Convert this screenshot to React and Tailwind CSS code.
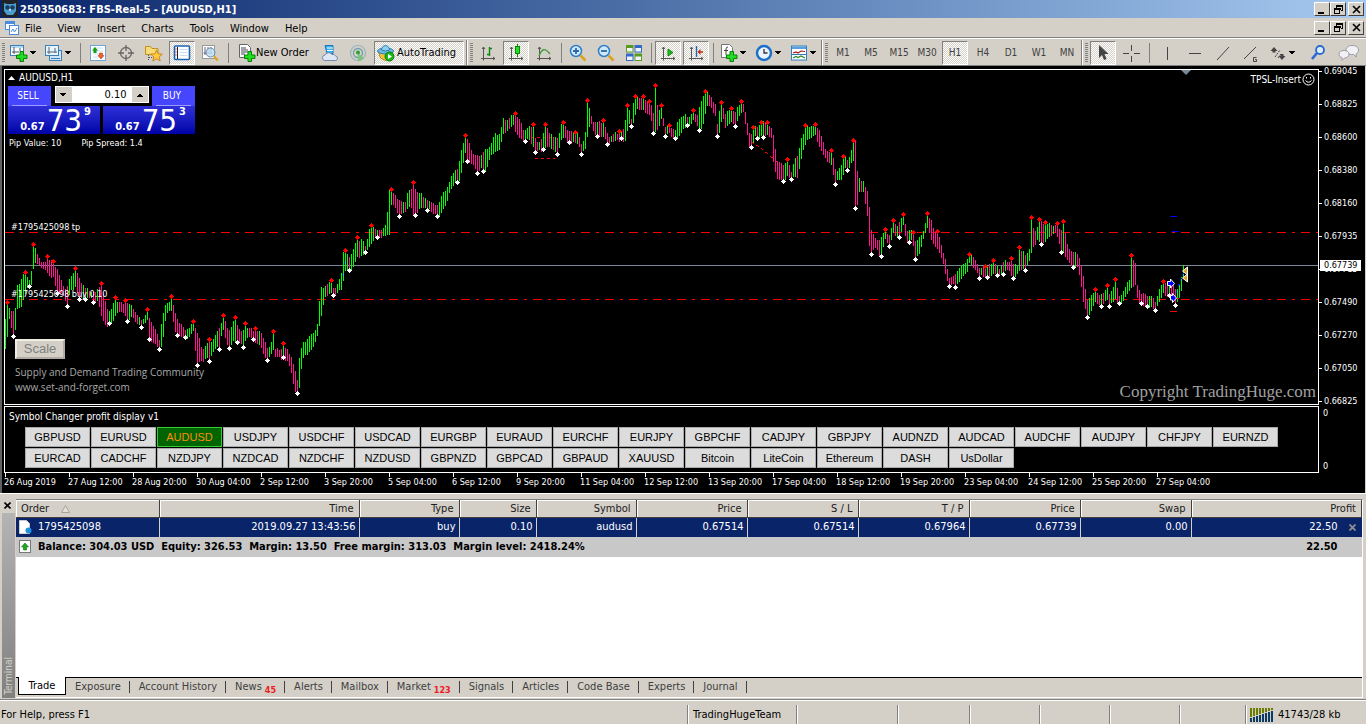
import { useState } from "react";

const MENU = ["File", "View", "Insert", "Charts", "Tools", "Window", "Help"];
const FRAMES = ["M1", "M5", "M15", "M30", "H1", "H4", "D1", "W1", "MN"];
const PRICES = [
  "0.69045", "0.68825", "0.68600", "0.68380", "0.68160", "0.67935",
  "0.67715", "0.67490", "0.67270", "0.67050", "0.66825",
];
const DATES = [
  "26 Aug 2019", "27 Aug 12:00", "28 Aug 20:00", "30 Aug 04:00", "2 Sep 12:00",
  "3 Sep 20:00", "5 Sep 04:00", "6 Sep 12:00", "9 Sep 20:00", "11 Sep 04:00",
  "12 Sep 12:00", "13 Sep 20:00", "17 Sep 04:00", "18 Sep 12:00", "19 Sep 20:00",
  "23 Sep 04:00", "24 Sep 12:00", "25 Sep 20:00", "27 Sep 04:00",
];
const SYMBOLS = [
  ["GBPUSD", "EURUSD", "AUDUSD", "USDJPY", "USDCHF", "USDCAD", "EURGBP", "EURAUD", "EURCHF", "EURJPY",
    "GBPCHF", "CADJPY", "GBPJPY", "AUDNZD", "AUDCAD", "AUDCHF", "AUDJPY", "CHFJPY", "EURNZD"],
  ["EURCAD", "CADCHF", "NZDJPY", "NZDCAD", "NZDCHF", "NZDUSD", "GBPNZD", "GBPCAD", "GBPAUD", "XAUUSD",
    "Bitcoin", "LiteCoin", "Ethereum", "DASH", "UsDollar"],
];
const COLUMNS = [
  ["Order", "1795425098"],
  ["Time", "2019.09.27 13:43:56"],
  ["Type", "buy"],
  ["Size", "0.10"],
  ["Symbol", "audusd"],
  ["Price", "0.67514"],
  ["S / L", "0.67514"],
  ["T / P", "0.67964"],
  ["Price", "0.67739"],
  ["Swap", "0.00"],
  ["Profit", "22.50"],
];
const TABS = [
  ["Exposure"], ["Account History"], ["News", "45"], ["Alerts"], ["Mailbox"], ["Market", "123"],
  ["Signals"], ["Articles"], ["Code Base"], ["Experts"], ["Journal"],
];

// x, top and bottom of the bar range
const RANGE = [
  5,320,347, 7,303,336, 9,310,318, 12,312,332, 15,309,330, 17,287,309, 20,282,307, 22,276,300, 25,274,291, 27,279,286,
  30,281,285, 32,262,280, 33,247,268, 35,250,262, 38,256,264, 42,265,269, 47,260,270, 50,262,275, 53,263,275, 57,270,292,
  62,285,292, 66,290,304, 70,278,292, 75,270,284, 79,280,296, 85,289,297, 90,292,297, 95,294,303, 98,287,300, 101,287,313,
  106,307,325, 110,313,325, 113,305,320, 116,302,313, 121,304,312, 125,303,313, 128,305,318, 132,307,314, 136,315,322,
  140,320,325, 144,318,324, 147,313,320, 150,320,338, 155,331,341, 159,340,348, 162,317,344, 166,304,312, 171,300,311,
  175,313,332, 179,324,332, 184,330,337, 188,330,337, 193,323,330, 196,330,362, 198,337,363, 202,350,360, 206,346,354,
  209,343,358, 213,340,350, 218,331,345, 223,318,330, 227,328,345, 230,331,347, 232,325,337, 235,320,340, 239,330,340,
  242,333,345, 246,327,338, 250,330,337, 255,331,340, 260,333,343, 264,340,355, 268,352,358, 273,335,350, 275,350,357,
  280,350,357, 283,348,356, 288,352,360, 292,360,375, 294,369,390, 297,380,392, 299,358,388, 302,345,360, 308,338,350,
  313,335,345, 317,325,334, 320,290,320, 324,287,298, 331,283,293, 334,290,295, 338,285,288, 341,273,288, 342,253,283,
  345,252,270, 348,258,268, 352,252,270, 357,241,257, 362,240,252, 365,248,251, 369,230,245, 371,228,243, 375,229,237,
  381,232,238, 386,223,232, 389,192,232, 391,192,203, 394,194,203, 398,202,215, 401,201,213, 405,203,212, 408,191,208,
  411,189,205, 413,184,213, 416,195,213, 420,192,205, 424,200,207, 428,200,208, 433,205,214, 438,205,214, 442,195,208,
  446,190,203, 449,183,192, 454,170,183, 458,170,182, 460,155,180, 462,145,165, 465,138,150, 468,142,160, 473,155,163,
  477,157,172, 482,154,167, 486,150,172, 490,146,152, 495,135,150, 500,135,147, 502,120,134, 508,120,130, 513,115,125,
  515,114,129, 519,121,135, 524,132,140, 528,128,137, 533,126,147, 536,145,152, 542,138,148, 545,127,145, 549,133,145,
  554,139,150, 558,137,152, 561,125,140, 564,124,137, 568,132,141, 574,134,140, 578,134,142, 581,146,153, 584,138,149,
  586,126,148, 587,103,137, 590,113,122, 593,122,128, 597,124,135, 603,122,135, 608,138,143, 613,135,142, 619,133,139,
  624,131,139, 626,113,138, 628,107,120, 631,120,125, 634,97,120, 636,96,108, 640,100,110, 645,100,110, 650,104,113,
  653,113,131, 655,87,130, 658,115,128, 661,107,118, 665,128,134, 669,126,133, 675,132,137, 678,120,135, 684,116,127,
  690,117,126, 693,112,120, 697,115,123, 700,105,128, 704,96,120, 706,91,103, 710,98,105, 715,104,116, 717,125,134,
  720,107,132, 722,104,112, 725,115,125, 731,110,120, 735,113,124, 740,103,113, 743,105,112, 746,118,130, 749,133,144,
  751,135,145, 755,128,134, 758,127,137, 762,123,134, 767,123,135, 771,130,138, 773,135,162, 777,162,176, 780,165,177,
  784,165,180, 787,161,175, 791,172,178, 794,160,177, 798,157,178, 800,139,160, 803,135,147, 806,127,139, 811,127,136,
  815,126,134, 819,130,147, 824,148,157, 829,153,160, 831,152,162, 833,160,173, 836,173,178, 841,167,179, 845,156,168,
  848,163,170, 853,142,158, 855,142,205, 857,173,202, 859,180,190, 863,182,190, 867,193,215, 869,207,245, 871,230,252,
  875,240,248, 880,240,254, 885,232,237, 889,236,245, 893,222,232, 897,226,237, 900,222,235, 903,215,225, 907,232,240,
  912,232,238, 915,242,257, 919,239,253, 924,229,236, 927,215,228, 931,220,237, 934,233,243, 938,233,248, 942,250,258,
  946,265,278, 949,278,285, 953,278,284, 958,269,280, 962,268,275, 967,260,270, 969,255,262, 974,258,268, 979,270,277,
  984,266,273, 988,267,277, 993,262,272, 998,270,275, 1004,262,272, 1009,262,268, 1013,266,278, 1018,266,270,
  1019,250,269, 1025,255,268, 1029,250,261, 1031,219,253, 1034,232,244, 1038,226,235, 1040,222,243, 1045,225,240,
  1050,225,235, 1056,226,233, 1060,230,247, 1062,230,252, 1063,223,250, 1067,246,258, 1072,253,265, 1077,254,266,
  1080,260,280, 1083,278,302, 1087,300,316, 1091,297,308, 1095,292,300, 1100,297,305, 1107,287,300, 1109,296,306,
  1115,282,296, 1119,298,303, 1124,290,298, 1130,278,288, 1131,257,288, 1135,265,285, 1137,285,298, 1141,295,302,
  1146,296,305, 1151,297,306, 1155,302,310, 1159,290,302, 1163,283,293, 1168,283,294, 1172,283,295, 1175,290,304,
  1178,290,300, 1181,277,290, 1183,265,278,
];

// fractal points, x and y
const HIGHS = [
  7,302, 25,272, 33,244, 47,256, 53,261, 75,268, 101,283, 115,297, 125,300, 147,309, 171,296, 193,321, 209,339, 223,315,
  235,317, 245,323, 255,328, 273,331, 283,343, 331,280, 345,250, 357,237, 371,225, 391,189, 413,182, 465,135, 515,113,
  533,124, 545,124, 563,122, 575,132, 587,100, 603,120, 619,131, 627,105, 635,96, 643,96, 649,101, 655,85, 661,105,
  669,125, 693,110, 705,91, 721,102, 731,108, 741,101, 753,127, 761,122, 767,122, 787,159, 805,125, 815,124, 831,150,
  843,156, 853,140, 885,229, 893,220, 903,214, 913,232, 927,213, 937,231, 969,254, 985,266, 993,260, 1011,258, 1019,247,
  1031,217, 1039,219, 1045,222, 1057,223, 1063,221, 1095,289, 1107,285, 1115,279, 1131,255, 1163,281,
];
const LOWS = [
  13,336, 29,286, 57,293, 67,306, 79,299, 85,299, 93,302, 109,323, 127,321, 141,327, 149,339, 159,349, 177,335, 185,337,
  197,365, 209,361, 219,349, 229,348, 237,342, 243,347, 253,339, 267,360, 283,357, 297,393, 333,295, 349,270, 365,252,
  377,237, 399,216, 415,215, 427,210, 437,216, 457,182, 467,161, 477,173, 483,171, 525,141, 535,152, 543,149, 557,154,
  569,142, 581,154, 597,136, 607,144, 621,138, 631,126, 653,133, 665,136, 675,138, 687,125, 699,130, 717,136, 735,126,
  751,147, 757,138, 763,137, 783,181, 791,179, 835,184, 847,170, 855,208, 871,254, 881,256, 889,246, 899,237, 909,242,
  915,259, 949,286, 955,287, 979,278, 987,277, 997,275, 1003,274, 1013,278, 1025,270, 1041,244, 1061,252, 1073,267,
  1087,317, 1101,306, 1109,306, 1119,303, 1141,303, 1147,306, 1155,310, 1169,295, 1175,305,
];

function pairs(list) {
  const out = [];
  for (let i = 0; i < list.length; i += 2) out.push([list[i], list[i + 1]]);
  return out;
}

function buildBars() {
  const highs = new Map(pairs(HIGHS));
  const lows = new Map(pairs(LOWS));
  const bars = [];
  let k = 0;
  let last = 340;
  for (let x = 5; x <= 1183; x += 2) {
    while (k + 3 < RANGE.length - 3 && RANGE[k + 3] <= x) k += 3;
    const t = Math.min(1, (x - RANGE[k]) / (RANGE[k + 3] - RANGE[k]));
    const n = (x * 7919) % 13;
    let top = Math.round(RANGE[k + 1] + (RANGE[k + 4] - RANGE[k + 1]) * t) - (n % 3);
    let bottom = Math.round(RANGE[k + 2] + (RANGE[k + 5] - RANGE[k + 2]) * t) + (n % 4);
    if (highs.has(x)) top = highs.get(x) + 1;
    if (lows.has(x)) bottom = lows.get(x);
    const mid = (top + bottom) / 2;
    bars.push({ x, top, h: Math.max(3, bottom - top), up: mid + (n % 5) - 2 < last });
    last = mid;
  }
  return bars;
}

const BARS = buildBars();

/* ---------- toolbar parts ---------- */

function Caret() {
  return (
    <svg width="7" height="4" viewBox="0 0 7 4" shapeRendering="crispEdges">
      <path d="M0 0h6L3 4z" fill="#000" />
    </svg>
  );
}

function Tool({ label, pressed, drop, children }) {
  if (drop) {
    return (
      <button aria-label={label} className="flex h-6 w-[35px] items-center gap-px pl-[3px]">
        <span className="flex w-5 justify-center">{children}</span>
        <Caret />
      </button>
    );
  }
  return (
    <span className="flex h-6 w-7 justify-center">
      <button
        aria-label={label}
        className={
          pressed
            ? "flex w-[26px] items-center justify-center border border-t-[#808080] border-l-[#808080] border-r-white border-b-white bg-[repeating-conic-gradient(#ffffff_0_25%,#d4d0c8_0_50%)] bg-[length:2px_2px]"
            : "flex w-[26px] items-center justify-center"
        }
      >
        {children}
      </button>
    </span>
  );
}

function Sep({ narrow }) {
  return (
    <span className={narrow ? "flex h-6 w-[6px] justify-center" : "flex h-6 w-2 justify-center"}>
      <span className="h-5 w-px self-center bg-[#808080]" />
    </span>
  );
}

function Grip({ edge }) {
  return (
    <span className="flex h-[26px] w-2 items-center gap-[2px]">
      {edge && <span className="h-[26px] w-[2px] border-r border-white bg-[#808080]" />}
      <span className="h-5 w-[3px] bg-[repeating-linear-gradient(#808080_0_1px,#d4d0c8_1px_2px)]" />
    </span>
  );
}

function Icon({ children, size = 18 }) {
  return <svg width={size} height={size} viewBox="0 0 18 18" fill="none">{children}</svg>;
}

const Plus = ({ x = 6, y = 7 }) => (
  <path transform={`translate(${x} ${y})`} d="M4 .5h3.500v3.500h3.500v3.500h-3.500v3h-3.500v-3h-3.500v-3.500h3.500z" fill="#22dd22" stroke="#058205" />
);

function NewChart() {
  return (
    <Icon>
      <rect x="0.500" y="1.500" width="13" height="10" fill="#fff" stroke="#3a7fb8" />
      <path d="M1 2h12v2h-12z" fill="#b8dcf4" />
      <path d="M4 3v7M2 8h7M10 4v3" stroke="#456" />
      <Plus />
    </Icon>
  );
}
function Profiles() {
  return (
    <Icon>
      <rect x="4.500" y="6.500" width="12" height="10" fill="#cfe6f8" stroke="#3a7fb8" />
      <rect x="0.500" y="1.500" width="13" height="10" fill="#e8f4fd" stroke="#3a7fb8" />
      <path d="M4 3v7M2 8h10M10 4v5" stroke="#567" />
      <path d="M6 14.500h9" stroke="#3a7fb8" />
    </Icon>
  );
}
function MarketWatch() {
  return (
    <Icon>
      <rect x="1.500" y="1.500" width="15" height="15" fill="#fff" stroke="#6aa7d6" />
      <path d="M4 4h10M4 7h10M4 10h10M4 13h10" stroke="#c8dff0" />
      <path d="M6 3l3 3.500H7.500V9h-3V6.500H3z" fill="#18a018" />
      <path d="M12 15l3-3.500h-1.500V9h-3v2.500H9z" fill="#f06030" stroke="#b03010" strokeWidth=".5" />
    </Icon>
  );
}
function Target() {
  return (
    <Icon>
      <circle cx="9" cy="9" r="5.500" stroke="#666" strokeWidth="1.300" />
      <path d="M9 1v6M9 11v6M1 9h6M11 9h6" stroke="#666" strokeWidth="1.300" />
    </Icon>
  );
}
function Favorites() {
  return (
    <Icon>
      <path d="M.5 2.500h5l1.500 2h6v6H.5z" fill="#f8dc78" stroke="#c09020" />
      <path d="M3.500 11v6M4 13.500h5" stroke="#555" strokeDasharray="1 1" />
      <path d="M11.500 6l1.700 3.800 4.100.4-3.100 2.700 1 4.100-3.700-2.200L7.800 17l1-4.100L5.700 10.200l4.100-.4z" fill="#ffc840" stroke="#c07810" strokeWidth=".8" />
    </Icon>
  );
}
function Navigator() {
  return (
    <Icon>
      <rect x="1.500" y="2" width="15" height="13.500" rx="1" fill="#fff" stroke="#1c64b4" strokeWidth="1.600" />
      <path d="M4.500 3v12" stroke="#222" />
      <path d="M2.500 5h1M2.500 8h1M2.500 11h1" stroke="#d00" />
      <path d="M6.500 5.500h8M6.500 8.500h8M6.500 11.500h8" stroke="#c9def2" />
    </Icon>
  );
}
function Tester() {
  return (
    <Icon>
      <rect x="1.500" y="1.500" width="12" height="13" fill="#fff" stroke="#999" />
      <path d="M4 3v8M2.500 9h9M7 3v4M10 3v5" stroke="#668" />
      <circle cx="9.500" cy="8.500" r="4.500" fill="#b9dcf2" fillOpacity=".8" stroke="#6d8ba5" />
      <path d="M12.800 12.200l4 4.300" stroke="#d8a420" strokeWidth="2.400" />
    </Icon>
  );
}
function NewOrderIcon() {
  return (
    <Icon>
      <path d="M1.500.5h8l3 3v10h-11z" fill="#fff" stroke="#666" />
      <path d="M3 4h5M3 6h7M3 8h7M3 10h4" stroke="#445" />
      <Plus x={6} y={7} />
    </Icon>
  );
}
function Cloud() {
  return (
    <Icon>
      <path d="M4 1.500h8v8H6z" fill="#38b0f0" stroke="#1878c0" />
      <path d="M6 4h6M6 6.500h6" stroke="#fff" />
      <path d="M3.500 16.500a2.800 2.800 0 0 1 .5-5.500 4 4 0 0 1 7-.5 2.800 2.800 0 0 1 3.500 1.500 2.300 2.300 0 0 1 .3 4.500z" fill="#dfe7f4" stroke="#7488b0" />
    </Icon>
  );
}
function Signals() {
  return (
    <Icon>
      <circle cx="9" cy="9" r="7.500" stroke="#9ab4bd" strokeWidth="1.200" />
      <circle cx="9" cy="9" r="4.500" stroke="#6e9fae" strokeWidth="1.300" />
      <path d="M9 9v8.500a8 8 0 0 0 6-3.500z" fill="#7cc47c" />
      <circle cx="9" cy="8.500" r="2" fill="#30a030" />
    </Icon>
  );
}
function AutoIcon() {
  return (
    <Icon>
      <path d="M1.500 8l2 6 5 2.500 5-1 2-7z" fill="#f2c63c" stroke="#b8860b" />
      <ellipse cx="8.500" cy="7" rx="8" ry="3" fill="#6cb8e0" stroke="#2f7fae" />
      <path d="M4.500 6a4 4.500 0 0 1 8 0q-4 2-8 0z" fill="#8fd0f0" stroke="#2f7fae" />
      <circle cx="12.500" cy="12.500" r="4.500" fill="#18b818" stroke="#0a7a0a" />
      <path d="M11 10l4 2.500-4 2.500z" fill="#fff" />
    </Icon>
  );
}
const Axes = () => <path d="M4.500 3v13.500M2 14.500h14M3 5l1.500-2L6 5M14 13l2 1.500-2 1.500" stroke="#555" />;

function BarsIcon() {
  return <Icon><Axes /><path d="M10.500 3v9M8 10.500h2M11 4.500h2" stroke="#0a8a0a" strokeWidth="1.400" /></Icon>;
}
function CandleIcon() {
  return <Icon><Axes /><path d="M10.500 0v13" stroke="#0a8a0a" /><rect x="8.500" y="2.500" width="4" height="7" fill="#22dd22" stroke="#0a8a0a" /></Icon>;
}
function LineIcon() {
  return <Icon><Axes /><path d="M4 12C7 4 10 4 15 10" stroke="#3a9a3a" strokeWidth="1.300" /></Icon>;
}
function Zoom({ plus }) {
  return (
    <Icon>
      <circle cx="7" cy="7" r="5.500" fill="#cfe9fb" stroke="#2f7fc8" strokeWidth="1.500" />
      <path d={plus ? "M4 7h6M7 4v6" : "M4 7h6"} stroke="#2a6aa8" strokeWidth="1.800" />
      <path d="M11.500 11.500l5 5" stroke="#d8a420" strokeWidth="2.600" />
    </Icon>
  );
}
function Tile() {
  return (
    <Icon>
      <path d="M1 1h7.500v7.500H1z" fill="#5a9a20" /><path d="M9.500 1H17v7.500H9.500z" fill="#3468c8" />
      <path d="M1 9.500h7.500V17H1z" fill="#3468c8" /><path d="M9.500 9.500H17V17H9.500z" fill="#5a9a20" />
      <path d="M2 4h5.500v3.500H2zM10.500 4H16v3.500h-5.500zM2 12.500h5.500V16H2zM10.500 12.500H16V16h-5.500z" fill="#eef4fa" />
    </Icon>
  );
}
function AutoScroll() {
  return <Icon><Axes /><path d="M9 5l5 3.500L9 12z" fill="#22b822" stroke="#0a8a0a" /></Icon>;
}
function Shift() {
  return <Icon><Axes /><path d="M9.500 2v11" stroke="#1c64b4" strokeWidth="1.400" /><path d="M16 8h-4" stroke="#c03010" strokeWidth="1.500" /><path d="M10.500 8l3-3v6z" fill="#c03010" /></Icon>;
}
function Indicators() {
  return (
    <Icon>
      <path d="M1.500.5h8l3 3v10h-11z" fill="#fff" stroke="#777" />
      <path d="M6 11V5q0-2 2-2M4 6.500h4" stroke="#444" />
      <Plus />
    </Icon>
  );
}
function ClockIcon() {
  return (
    <Icon>
      <circle cx="9" cy="9" r="7" fill="#eaf4fd" stroke="#1c70cc" strokeWidth="2.500" />
      <path d="M9 5v4h3.500" stroke="#333" strokeWidth="1.300" />
    </Icon>
  );
}
function Template() {
  return (
    <Icon>
      <rect x="1.500" y="2" width="15" height="14" fill="#fff" stroke="#2f7fc0" />
      <path d="M2 2.500h14v2.500H2z" fill="#5aa0dc" />
      <path d="M3 9l3-1 2 1 3-2 4 .5" stroke="#a02010" strokeWidth="1.200" />
      <path d="M2 10.500h14" stroke="#2f7fc0" />
      <path d="M3 14l3-1.500 2 1 3-1.500 4 2" stroke="#208a20" strokeWidth="1.200" />
    </Icon>
  );
}
function WinGlyph({ kind }) {
  return (
    <svg width="9" height="9" viewBox="0 0 9 9" fill="none" stroke="#000" shapeRendering="crispEdges">
      {kind === "Minimize" && <path d="M0 8h6" strokeWidth="2" />}
      {kind === "Restore" && (
        <>
          <path d="M2 1h7M0 4h7" strokeWidth="2" />
          <path d="M2.500 2v1M8.500 2v4M7 5.500h2M.5 4v5M0 8.500h6M5.500 4v5" />
        </>
      )}
      {kind === "Close" && <path d="M1 1l7 7M8 1L1 8" strokeWidth="1.600" shapeRendering="auto" />}
    </svg>
  );
}
function WinButtons({ target }) {
  return (
    <div className="flex pr-[2px]">
      {["Minimize", "Restore", "Close"].map((k) => (
        <button
          key={k}
          aria-label={`${k} ${target}`}
          className={
            "flex h-[14px] w-4 items-center justify-center border border-t-white border-l-white border-r-[#404040] border-b-[#404040] bg-[#d4d0c8]" +
            (k === "Close" ? " ml-[2px]" : "")
          }
        >
          <WinGlyph kind={k} />
        </button>
      ))}
    </div>
  );
}

function Toolbar() {
  const [frame, setFrame] = useState("H1");
  return (
    <div className="flex h-7 items-center overflow-hidden border-t border-white border-b border-b-[#808080] bg-[#d4d0c8] pt-[2px]">
      <span className="flex w-[6px] pl-[2px]"><Grip /></span>
      <Tool label="New chart" drop><NewChart /></Tool>
      <Tool label="Profiles" drop><Profiles /></Tool>
      <Sep />
      <Tool label="Market Watch"><MarketWatch /></Tool>
      <Tool label="Data Window"><Target /></Tool>
      <Tool label="Navigator"><Favorites /></Tool>
      <Tool label="Terminal" pressed><Navigator /></Tool>
      <Tool label="Strategy Tester"><Tester /></Tool>
      <Sep />
      <button className="flex h-6 w-[84px] items-center pl-[6px] text-black"><NewOrderIcon /><span className="whitespace-nowrap">New Order</span></button>
      <Tool label="MQL5 Cloud"><Cloud /></Tool>
      <Tool label="Signals"><Signals /></Tool>
      <button className="mx-[2px] flex h-6 w-[90px] items-center gap-[2px] border border-t-[#808080] border-l-[#808080] border-r-white border-b-white bg-[repeating-conic-gradient(#ffffff_0_25%,#d4d0c8_0_50%)] bg-[length:2px_2px] pl-[2px] text-black">
        <AutoIcon />
        <span>AutoTrading</span>
      </button>
      <Grip edge />
      <Tool label="Bar Chart"><BarsIcon /></Tool>
      <Tool label="Candlesticks" pressed><CandleIcon /></Tool>
      <Tool label="Line Chart"><LineIcon /></Tool>
      <Sep narrow />
      <Tool label="Zoom In"><Zoom plus /></Tool>
      <Tool label="Zoom Out"><Zoom /></Tool>
      <Tool label="Tile Windows"><Tile /></Tool>
      <Sep narrow />
      <Tool label="Auto Scroll" pressed><AutoScroll /></Tool>
      <Tool label="Chart Shift" pressed><Shift /></Tool>
      <Sep narrow />
      <Tool label="Indicators" drop><Indicators /></Tool>
      <Tool label="Periods" drop><ClockIcon /></Tool>
      <Tool label="Templates" drop><Template /></Tool>
      <Grip edge />
      {FRAMES.map((f) => (
        <span key={f} className="flex h-6 w-7 justify-center">
          <button
            onClick={() => setFrame(f)}
            className={
              f === frame
                ? "w-[26px] border border-t-[#808080] border-l-[#808080] border-r-white border-b-white bg-[repeating-conic-gradient(#ffffff_0_25%,#d4d0c8_0_50%)] bg-[length:2px_2px] text-[10px] text-[#404040]"
                : "w-[26px] text-[10px] text-[#404040]"
            }
          >
            {f}
          </button>
        </span>
      ))}
      <Grip edge />
      <Tool label="Cursor" pressed>
        <Icon><path d="M5 1v13l3-3 2 5 2.500-1-2-5h4z" fill="#444" /></Icon>
      </Tool>
      <Tool label="Crosshair">
        <Icon><path d="M9.500 1v6M9.500 12v6M1 9.500h6M12 9.500h6" stroke="#444" /></Icon>
      </Tool>
      <Sep />
      <Tool label="Vertical line"><Icon><path d="M9.500 3v13" stroke="#444" /></Icon></Tool>
      <Tool label="Horizontal line"><Icon><path d="M3 9.500h12" stroke="#444" /></Icon></Tool>
      <Tool label="Trendline"><Icon><path d="M3 16L15 3" stroke="#444" /></Icon></Tool>
      <Tool label="Channel">
        <Icon><path d="M2 15L14 3M14.500 13.500h-3v4h3v-2h-1.500" stroke="#444" /></Icon>
      </Tool>
      <Tool label="Arrows" drop>
        <Icon>
          <path d="M5 3l3.500 4H6.500v1.500h-3V7H1.500zM13 16l-3.500-4h2v-2h3v2h2z" fill="#444" />
          <path d="M6 13l5-7M9 14l3-4" stroke="#444" strokeDasharray="2 1" />
        </Icon>
      </Tool>
      <span className="ml-auto flex gap-[3px] pr-[3px]">
        <Tool label="Search">
          <Icon>
            <circle cx="11" cy="6" r="4" fill="#dcecfa" stroke="#2868d0" strokeWidth="1.800" />
            <path d="M8 9l-5 6" stroke="#2868d0" strokeWidth="2.600" />
          </Icon>
        </Tool>
        <Tool label="Chat">
          <svg width="22" height="18" viewBox="0 0 22 18" fill="#f2f2f6" stroke="#9a9aa6">
            <path d="M14 1.500c4 0 6.500 2 6.500 4.500 0 2-1 3.200-2.500 4l.5 3-3-2.500h-2c-3.500 0-5.500-2-5.500-4.500s2.500-4.500 6-4.500z" />
            <path d="M6 6.500c3 0 5 1.500 5 3.700S9 14 6.500 14L4 16.500V13.600C2 13 1 11.800 1 10.200c0-2.200 2-3.700 5-3.700z" />
          </svg>
        </Tool>
      </span>
    </div>
  );
}

/* ---------- chart ---------- */

function Quote({ side, big, sup }) {
  return (
    <div aria-label={side} className="flex h-[28px] flex-1 items-end justify-end bg-gradient-to-b from-[#2f2fd8] to-[#0000a8] pr-[9px] text-white">
      <span className="pb-[2px] text-[11px] leading-[11px] font-bold">0.67</span>
      <span className="pr-[2px] pl-[2px] text-[31px] leading-[27px]">{big}</span>
      <span className="self-start text-[11px] leading-[11px] font-bold">{sup}</span>
    </div>
  );
}

function TradePanel() {
  return (
    <div className="absolute top-0 left-[3px] w-[187px] text-[10px] text-white">
      <div className="flex h-4 items-center gap-1">
        <svg width="7" height="4" viewBox="0 0 7 4"><path d="M0 4h7L3.500 0z" fill="#fff" /></svg>
        <span>AUDUSD,H1</span>
      </div>
      <div className="flex h-[20px] items-start justify-between">
        <button className="h-[20px] w-[43px] bg-[#4646ff] text-[10px]">
          <span className="mx-1 block border-b border-[#9c9cff] pr-[3px] leading-[18px]">SELL</span>
        </button>
        <div className="flex h-[17px] w-[94px] border border-white bg-white">
          <button aria-label="Decrease volume" className="flex w-[16px] items-center justify-center bg-[#d4d0c8]"><Caret /></button>
          <input aria-label="Volume" defaultValue="0.10" className="w-0 flex-1 bg-white px-[5px] text-right text-[11px] leading-[14px] text-black" />
          <button aria-label="Increase volume" className="flex w-[16px] items-center justify-center bg-[#d4d0c8]"><span className="rotate-180"><Caret /></span></button>
        </div>
        <button className="h-[20px] w-[43px] bg-[#4646ff] text-[10px]">
          <span className="mx-1 block border-b border-[#9c9cff] pr-[3px] leading-[18px]">BUY</span>
        </button>
      </div>
      <div className="flex gap-[3px]">
        <Quote side="Bid" big="73" sup="9" />
        <Quote side="Ask" big="75" sup="3" />
      </div>
      <div className="flex gap-5 pt-[3px] pl-px text-[9px] leading-[12px]">
        <span>Pip Value: 10</span>
        <span>Pip Spread: 1.4</span>
      </div>
    </div>
  );
}

function PriceChart() {
  return (
    <svg width="1313" height="333" viewBox="5 70 1313 333" fill="none" shapeRendering="crispEdges" className="max-w-none">
      <path d="M5 265.500H1318" stroke="#778899" />
      <path d="M5 232.500H1318M5 299.500H1318" stroke="#ff0000" strokeDasharray="9 6 3 6" />
      <path d="M531 137.500h22M535 158.500h20M751 142l10 6 16 14M869.500 212v28" stroke="#ff0000" strokeDasharray="3 3" />
      <path d="M341 282l5-30" stroke="#0000ff" strokeDasharray="3 3" />
      {BARS.map((b) => (
        <rect key={b.x} x={b.x} y={b.top} width="1" height={b.h} fill={b.up ? "#00ff00" : "#ff1493"} />
      ))}
      {pairs(HIGHS).map(([x, y]) => (
        <path key={"h" + x} d={`M${x} ${y - 2}h1v1h1v1h1v1h-1v1h-1v1h-1v-1h-1v-1h-1v-1h1v-1h1z`} fill="#ff0000" />
      ))}
      {pairs(LOWS).map(([x, y]) => (
        <path key={"l" + x} d={`M${x} ${y - 2}h1v1h1v1h1v1h-1v1h-1v1h-1v-1h-1v-1h-1v-1h1v-1h1z`} fill="#fff" />
      ))}
      <path d="M1170 216.500h7M1172 231.500h7" stroke="#0000ff" />
      <path d="M1170 311.500h7M1173 298.500h6" stroke="#ff0000" />
      <path d="M1174 298l10-27" stroke="#0000ff" strokeDasharray="3 3" />
      <g shapeRendering="auto" stroke="#fff" fill="#0000ff">
        <path d="M1167.500 281.500h3v-2.500l4 4.500-4 4.500v-2.500h-3z" />
        <path d="M1170.500 295.500h2v-2l4 4.500-4 4.500v-2.500h-2z" />
      </g>
      <g shapeRendering="auto" stroke="#fff" strokeWidth="1" fill="#daa520">
        <path d="M1187.500 267v8l-5-4z" />
        <path d="M1187.500 274v8l-5-4z" />
      </g>
      <path d="M1181 70h10l-5 5z" fill="#778899" shapeRendering="auto" />
    </svg>
  );
}

function ChartWindow() {
  const [symbol, setSymbol] = useState("AUDUSD");
  return (
    <section className="flex flex-col border-l-2 border-l-[#606060] border-r border-r-[#d4d0c8] bg-black text-[9px] leading-[10px] text-white">
      <div className="flex items-start pl-[2px]">
        <div className="relative mt-[3px] h-[336px] min-w-0 flex-1 overflow-hidden border border-white">
          <PriceChart />
          <TradePanel />
          <span className="absolute top-[152px] left-[6px]">#1795425098 tp</span>
          <span className="absolute top-[219px] left-[6px]">#1795425098 buy 0.10</span>
          <span className="absolute top-[3px] right-[3px] flex items-center gap-[1px] text-[10px]">
            TPSL-Insert
            <svg width="13" height="13" viewBox="0 0 13 13" fill="none" stroke="#fff">
              <circle cx="6.500" cy="6.500" r="5.500" /><path d="M3.500 7.500q3 3.500 6 0M4.500 4v1.500M8.500 4v1.500" />
            </svg>
          </span>
          <button className="absolute top-[269px] left-[10px] h-5 w-[50px] border-2 border-t-[#f0ece4] border-l-[#f0ece4] border-r-[#b0aca4] border-b-[#b0aca4] bg-[#d4d0c8] font-['Liberation_Sans',sans-serif] text-[13px] leading-4 text-[#808080]">
            Scale
          </button>
          <div className="absolute top-[295px] left-[10px] font-['Open_Sans',sans-serif] text-[10px] leading-[15px] text-[#a9a9a9]">
            <p>Supply and Demand Trading Community</p>
            <p>www.set-and-forget.com</p>
          </div>
          <span className="absolute right-[2px] bottom-[3px] font-['Liberation_Serif',serif] text-[17px] leading-[18px] text-[#a0a0a0]">
            Copyright TradingHuge.com
          </span>
        </div>
        <div className="relative -mb-px w-[46px] shrink-0">
          <div className="flex flex-col gap-[23px]">
            {PRICES.map((p) => (
              <div key={p} className="flex h-[10px] items-center gap-[2px]">
                <span className="h-px w-[3px] bg-white" />
                {p}
              </div>
            ))}
          </div>
          <span className="absolute top-[194px] left-px h-[11px] w-[41px] bg-white pl-1 leading-[11px] text-black">0.67739</span>
        </div>
      </div>
      <div className="mt-px flex pl-[2px]">
        <div className="h-[67px] min-w-0 flex-1 overflow-hidden border border-white">
          <p className="pt-1 pl-1 text-[10px] leading-[11px]">Symbol Changer profit display v1</p>
          <div className="flex flex-col gap-px pt-[5px] pl-5">
            {SYMBOLS.map((row, i) => (
              <div key={i} className="flex gap-px">
                {row.map((s) => (
                  <button
                    key={s}
                    onClick={() => setSymbol(s)}
                    className={
                      s === symbol
                        ? "h-5 w-[65px] shrink-0 border border-[#32cd32] bg-[#006400] font-['Liberation_Sans',sans-serif] text-[11px] text-[#ff8c00]"
                        : "h-5 w-[65px] shrink-0 border border-[#a9a9a9] bg-[#dcdcdc] font-['Liberation_Sans',sans-serif] text-[11px] text-black"
                    }
                  >
                    {s}
                  </button>
                ))}
              </div>
            ))}
          </div>
        </div>
        <div className="flex w-[46px] shrink-0 flex-col justify-between py-[2px] pl-[4px]">
          <span>0</span>
          <span>0</span>
        </div>
      </div>
      <div className="flex h-5 overflow-hidden pl-[2px]">
        {DATES.map((d) => (
          <span key={d} className="w-[64px] shrink-0 whitespace-nowrap">
            <span className="ml-px block h-1 w-px bg-white" />
            {d}
          </span>
        ))}
      </div>
    </section>
  );
}

/* ---------- terminal ---------- */

function Terminal() {
  return (
    <section className="flex flex-1 border-t border-white bg-[#d4d0c8] pt-[5px]">
      <div className="flex w-4 shrink-0 flex-col items-center">
        <button aria-label="Close terminal" className="flex h-3 w-4 items-center justify-center pr-[2px]">
          <svg width="7" height="7" viewBox="0 0 7 7"><path d="M.5 .5l6 6M6.500 .5l-6 6" stroke="#000" strokeWidth="1.600" /></svg>
        </button>
        <div className="mt-[2px] flex w-[13px] flex-1 items-end justify-center bg-gradient-to-b from-[#b4b4b4] to-[#808080] pb-[3px]">
          <span className="rotate-180 text-[10px] leading-[13px] text-[#d4d0c8] [writing-mode:vertical-rl]">Terminal</span>
        </div>
      </div>
      <div className="mr-[3px] flex min-w-0 flex-1 flex-col border-t border-t-[#808080] border-r border-r-white border-b border-b-white">
        <div className="flex flex-1 flex-col bg-white">
          <table className="w-full table-fixed border-collapse">
            <colgroup>
              <col className="w-[143px]" /><col className="w-[200px]" /><col className="w-[100px]" />
              <col className="w-[77px]" /><col className="w-[100px]" /><col className="w-[111px]" />
              <col className="w-[111px]" /><col className="w-[111px]" /><col className="w-[111px]" />
              <col className="w-[111px]" /><col />
            </colgroup>
            <thead>
              <tr className="h-[17px] bg-[#d4d0c8] text-left text-[#202020]">
                {COLUMNS.map(([name], i) => (
                  <th
                    key={i}
                    className={
                      "border-r border-b border-[#404040] px-[5px] pt-[2px] pb-0 font-normal shadow-[inset_1px_1px_0_#fff]" +
                      (i ? " text-right" : "")
                    }
                  >
                    {name}
                    {i === 0 && (
                      <svg width="9" height="8" viewBox="0 0 9 8" className="ml-3 inline"><path d="M.5 7.500L4.500 .5l4 7z" fill="#e4e0d8" stroke="#a8a49c" /></svg>
                    )}
                  </th>
                ))}
              </tr>
            </thead>
            <tbody>
              <tr className="h-5 bg-[#0a246a] text-white">
                {COLUMNS.map(([, value], i) => {
                  if (i === 0) {
                    return (
                      <td key={i} className="border-r border-[#d4d0c8] p-0">
                        <span className="flex items-center gap-[6px] pl-[3px]">
                          <svg width="13" height="14" viewBox="0 0 13 14">
                            <path d="M.5 .5h7l3 3v10H.5z" fill="#fff" stroke="#ccc" /><circle cx="9.500" cy="10.500" r="3" fill="#2090e0" />
                          </svg>
                          {value}
                        </span>
                      </td>
                    );
                  }
                  if (i === 10) {
                    return (
                      <td key={i} className="p-0 pr-[6px]">
                        <span className="flex items-center justify-end gap-[11px]">
                          {value}
                          <button aria-label="Close order">
                            <svg width="7" height="7" viewBox="0 0 7 7"><path d="M.5 .5l6 6M6.500 .5l-6 6" stroke="#909090" strokeWidth="1.800" /></svg>
                          </button>
                        </span>
                      </td>
                    );
                  }
                  return <td key={i} className="border-r border-[#d4d0c8] p-0 pr-[3px] text-right">{value}</td>;
                })}
              </tr>
              <tr className="h-5 bg-[#c8c8c8] font-bold text-black">
                <td colSpan={10} className="p-0">
                  <span className="flex items-center gap-[7px] pl-[3px]">
                    <svg width="12" height="14" viewBox="0 0 12 14">
                      <rect x=".5" y=".5" width="11" height="12" fill="#fff" stroke="#777" />
                      <path d="M6 3l3.500 4H7.500v3h-3V7h-2z" fill="#22a822" stroke="#0a700a" strokeWidth=".6" />
                    </svg>
                    <span className="whitespace-pre">Balance: 304.03 USD  Equity: 326.53  Margin: 13.50  Free margin: 313.03  Margin level: 2418.24%</span>
                  </span>
                </td>
                <td className="p-0 pr-6 text-right">22.50</td>
              </tr>
            </tbody>
          </table>
        </div>
        <nav className="flex h-5 items-start border-t border-black bg-[#d4d0c8] pl-[2px]">
          <button className="-mt-px h-[18px] w-[48px] border-x border-b border-black bg-white text-black">Trade</button>
          {TABS.map(([name, count]) => (
            <button key={name} className="flex h-[18px] items-center pl-[9px] text-[#404040]">
              {name}
              {count && <span className="pt-[5px] pl-[3px] text-[9px] font-bold text-[#ee1c25]">{count}</span>}
              <span className="ml-2 h-3 w-px bg-[#404040]" />
            </button>
          ))}
        </nav>
      </div>
    </section>
  );
}

function StatusBar() {
  return (
    <footer className="mt-[2px] flex h-6 items-stretch border-t border-white bg-[#d4d0c8] pt-1 text-black shadow-[0_-1px_0_#808080]">
      <span className="flex flex-1 items-center pl-[1px]">For Help, press F1</span>
      <span className="flex w-[109px] items-center border-l border-[#808080] pl-[5px] shadow-[inset_1px_0_0_#fff]">TradingHugeTeam</span>
      <span className="w-[101px] border-l border-[#808080] shadow-[inset_1px_0_0_#fff]" />
      <span className="w-[72px] border-l border-[#808080] shadow-[inset_1px_0_0_#fff]" />
      <span className="w-[70px] border-l border-[#808080] shadow-[inset_1px_0_0_#fff]" />
      <span className="w-[70px] border-l border-[#808080] shadow-[inset_1px_0_0_#fff]" />
      <span className="w-[70px] border-l border-[#808080] shadow-[inset_1px_0_0_#fff]" />
      <span className="w-[66px] border-l border-[#808080] shadow-[inset_1px_0_0_#fff]" />
      <span className="flex w-[121px] items-center gap-1 border-l border-[#808080] pl-[4px] shadow-[inset_1px_0_0_#fff]">
        <svg width="24" height="14" viewBox="0 0 24 14" shapeRendering="crispEdges">
          {[0, 1, 2, 3, 4, 5, 6, 7].map((i) => (
            <g key={i}>
              <rect x={i * 3} y="0" width="2" height={9 - i} fill="#6b7d00" />
              <rect x={i * 3} y={10 - i} width="2" height={4 + i} fill="#0a3c64" />
            </g>
          ))}
        </svg>
        41743/28 kb
      </span>
    </footer>
  );
}

export default function App() {
  return (
    <div className="flex min-h-screen w-full flex-col bg-[#d4d0c8] font-['DejaVu_Sans_Condensed','DejaVu_Sans',sans-serif] text-[11px] leading-[14px]">
      <header className="flex h-[18px] items-center bg-gradient-to-r from-[#0a246a] to-[#a6caf0] text-white">
        <svg width="20" height="18" viewBox="0 0 20 18">
          <rect x="2" width="16" height="17" fill="#202428" />
          <path d="M4 3l3 1h6l3-1v8l-3 4H7l-3-4z" fill="#4a9cd0" />
          <circle cx="7.500" cy="7.500" r="2.200" fill="#1a3c58" /><circle cx="12.500" cy="7.500" r="2.200" fill="#1a3c58" />
          <path d="M9 9h2l-1 3z" fill="#e8f0f8" />
        </svg>
        <h1 className="flex-1 pt-px font-bold whitespace-nowrap">250350683: FBS-Real-5 - [AUDUSD,H1]</h1>
        <WinButtons target="application" />
      </header>

      <div className="flex h-5 items-center border-b border-[#808080]">
        <svg width="15" height="14" viewBox="0 0 15 14" fill="#fff" stroke="#4a8cdc" className="ml-[5px]">
          <rect x=".5" y=".5" width="9" height="8" /><path d="M0 2h10" strokeWidth="2" />
          <rect x="4.500" y="4.500" width="9" height="9" /><path d="M6 11l2-3 1.500 3L12 7" fill="none" />
        </svg>
        <nav className="flex flex-1 pt-[2px]">
          {MENU.map((m) => (
            <button key={m} className="pr-[11px] pl-[5px] text-black">{m}</button>
          ))}
        </nav>
        <WinButtons target="chart" />
      </div>

      <Toolbar />
      <ChartWindow />
      <Terminal />
      <StatusBar />
    </div>
  );
}
